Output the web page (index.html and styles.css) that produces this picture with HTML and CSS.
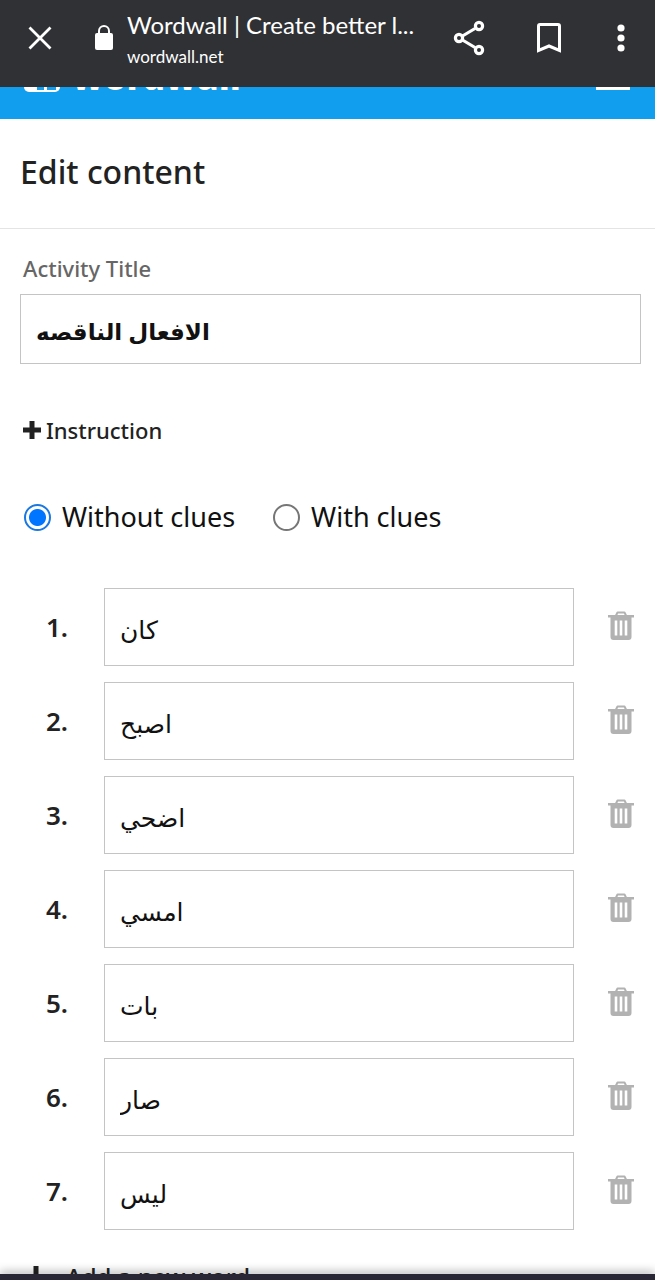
FILE: index.html
```
<!DOCTYPE html>
<html lang="en">
<head>
  <meta charset="UTF-8">
  <meta name="viewport" content="width=device-width, initial-scale=1">
  <title>Wordwall</title>
  <link rel="stylesheet" href="styles.css">
</head>
<body>
  <svg class="defs" aria-hidden="true">
    <symbol id="trash" viewBox="0 0 26 30">
      <path d="M8 4.500 9.500 1.500H16.500L18 4.500" fill="none" stroke="currentColor" stroke-width="2" stroke-linejoin="round"/>
      <path d="M0 4H26V6.500H23.500V26Q23.500 29 20.500 29H5.500Q2.500 29 2.500 26V6.500H0Z" fill="currentColor"/>
      <path d="M8 9.500V24.500M13 9.500V24.500M18 9.500V24.500" stroke="#fff" stroke-width="2.600"/>
    </symbol>
  </svg>

  <div class="toolbar">
    <button class="icon-btn" type="button" aria-label="Close">
      <svg width="24" height="24" viewBox="0 0 24 24"><path d="M1.500 1.500 22.500 22.500M22.500 1.500 1.500 22.500" fill="none" stroke="#fff" stroke-width="2.800"/></svg>
    </button>
    <svg class="lock" width="20" height="26" viewBox="0 0 20 26"><rect x="1" y="8" width="18" height="17" rx="2" fill="#fff"/><path d="M5 9V6a5 5 0 0 1 10 0v3" fill="none" stroke="#fff" stroke-width="2"/></svg>
    <div class="page-info">
      <div class="page-title">Wordwall | Create better l...</div>
      <div class="page-url">wordwall.net</div>
    </div>
    <div class="toolbar-actions">
      <button class="icon-btn" type="button" aria-label="Share">
        <svg width="32" height="36" viewBox="0 0 32 36"><g fill="none" stroke="#fff" stroke-width="3.200"><path d="M9.500 16 22 8.500M9.500 20 22 27.500"/><circle cx="6" cy="18" r="3.600"/><circle cx="26" cy="6" r="3.600"/><circle cx="26" cy="30" r="3.600"/></g></svg>
      </button>
      <button class="icon-btn" type="button" aria-label="Bookmark">
        <svg width="26" height="32" viewBox="0 0 26 32"><path d="M2.500 28.500V4Q2.500 2.500 4 2.500H22Q23.500 2.500 23.500 4V28.500L13 24Z" fill="none" stroke="#fff" stroke-width="3"/></svg>
      </button>
      <button class="icon-btn" type="button" aria-label="More options">
        <svg width="8" height="28" viewBox="0 0 8 28"><g fill="#fff"><circle cx="4" cy="4" r="3.600"/><circle cx="4" cy="14" r="3.600"/><circle cx="4" cy="24" r="3.600"/></g></svg>
      </button>
    </div>
  </div>

  <div class="page">
    <!-- Brand bar, scrolled partly under the toolbar -->
    <header class="brand-bar">
      <a class="brand" href="#">
        <svg width="36" height="36" viewBox="0 0 36 36"><rect width="36" height="36" rx="5" fill="#fff"/><path d="M13 34H20V27H13ZM23 34H32V27H23Z" fill="#129eee"/></svg>
        <span>wordwall</span>
      </a>
      <button class="menu-btn" type="button" aria-label="Menu"></button>
    </header>

    <div class="page-head">
      <h1>Edit content</h1>
    </div>

    <form class="editor">
      <label class="title-label" for="activityTitle">Activity Title</label>
      <input class="title-input" type="text" id="activityTitle" name="activityTitle" value="الافعال الناقصه">

      <button class="instruction" type="button">
        <svg width="18" height="18" viewBox="0 0 18 18"><path d="M9 2.500V15.500M2.500 9H15.500" stroke="currentColor" stroke-width="5" stroke-linecap="square"/></svg>
        Instruction
      </button>

      <div class="clues">
        <label><input type="radio" name="clues" value="without" checked> Without clues</label>
        <label><input type="radio" name="clues" value="with"> With clues</label>
      </div>

      <div class="words">
        <div class="word">
          <label for="word1">1.</label>
          <input type="text" id="word1" value="كان">
          <button type="button" aria-label="Delete word 1"><svg width="26" height="30"><use href="#trash"/></svg></button>
        </div>
        <div class="word">
          <label for="word2">2.</label>
          <input type="text" id="word2" value="اصبح">
          <button type="button" aria-label="Delete word 2"><svg width="26" height="30"><use href="#trash"/></svg></button>
        </div>
        <div class="word">
          <label for="word3">3.</label>
          <input type="text" id="word3" value="اضحي">
          <button type="button" aria-label="Delete word 3"><svg width="26" height="30"><use href="#trash"/></svg></button>
        </div>
        <div class="word">
          <label for="word4">4.</label>
          <input type="text" id="word4" value="امسي">
          <button type="button" aria-label="Delete word 4"><svg width="26" height="30"><use href="#trash"/></svg></button>
        </div>
        <div class="word">
          <label for="word5">5.</label>
          <input type="text" id="word5" value="بات">
          <button type="button" aria-label="Delete word 5"><svg width="26" height="30"><use href="#trash"/></svg></button>
        </div>
        <div class="word">
          <label for="word6">6.</label>
          <input type="text" id="word6" value="صار">
          <button type="button" aria-label="Delete word 6"><svg width="26" height="30"><use href="#trash"/></svg></button>
        </div>
        <div class="word">
          <label for="word7">7.</label>
          <input type="text" id="word7" value="ليس">
          <button type="button" aria-label="Delete word 7"><svg width="26" height="30"><use href="#trash"/></svg></button>
        </div>
      </div>

      <button class="add-word" type="button">
        <svg width="22" height="22" viewBox="0 0 22 22"><path d="M11 0V22M0 11H22" stroke="currentColor" stroke-width="5"/></svg>
        Add a new word
      </button>
    </form>
  </div>

  <div class="system-bar"></div>
</body>
</html>
```
FILE: styles.css
```
* {
  box-sizing: border-box;
}
body {
  margin: 0;
  height: 100vh;
  display: flex;
  flex-direction: column;
  background: #fff;
  color: #222;
  font-family: 'Noto Sans', 'Open Sans', 'DejaVu Sans', sans-serif;
}
button {
  border: none;
  background: none;
  padding: 0;
  color: inherit;
  font-family: inherit;
  cursor: pointer;
}
svg {
  display: block;
  flex: none;
}
.defs {
  position: absolute;
  width: 0;
  height: 0;
}

/* Browser toolbar */
.toolbar {
  flex: none;
  display: flex;
  align-items: center;
  padding: 8px 30px 15px 28px;
  background: #303134;
  color: #fff;
}
.toolbar > svg,
.toolbar button {
  margin-bottom: 4px;
}
.lock {
  margin-left: 42px;
}
.page-info {
  flex: 1;
  min-width: 0;
  margin: 0 30px 0 13px;
  font-family: Lato, sans-serif;
}
.page-title {
  font-size: 24px;
  line-height: 34px;
  white-space: nowrap;
  overflow: hidden;
  text-overflow: ellipsis;
}
.page-url {
  font-size: 17px;
  line-height: 30px;
}
.toolbar-actions {
  display: flex;
  align-items: center;
  gap: 51px;
}
.toolbar-actions .icon-btn:last-child {
  margin-left: 4px;
}

/* Page */
.page {
  flex: 1;
  min-height: 0;
  overflow: hidden;
}
.brand-bar {
  display: flex;
  justify-content: space-between;
  align-items: flex-start;
  height: 32px;
  padding: 0 25px 0 24px;
  overflow: hidden;
  background: #129eee;
}
.brand {
  display: flex;
  align-items: flex-end;
  gap: 12px;
  margin-top: -31px;
  color: #fff;
  font-size: 36px;
  font-weight: 800;
  line-height: 36px;
  text-decoration: none;
}
.brand span {
  margin-bottom: -3px;
}
.menu-btn {
  width: 34px;
  height: 3px;
  background: #fff;
}
.page-head {
  padding: 31px 20px 34px;
  border-bottom: 1px solid #e4e4e4;
}
h1 {
  margin: 0;
  font-size: 32px;
  font-weight: 500;
  line-height: 44px;
}
.editor {
  display: flex;
  flex-direction: column;
  align-items: flex-start;
  padding: 24px 14px 0 20px;
}
.title-label {
  padding-left: 3px;
  color: #666;
  font-size: 22px;
  font-weight: 500;
  line-height: 30px;
}
input[type="text"] {
  min-width: 0;
  border: 1px solid #c4c4c4;
  border-radius: 0;
  background: #fff;
  color: #111;
  font-family: inherit;
  font-size: 25px;
}
.editor .title-input {
  width: 100%;
  height: 70px;
  margin-top: 11px;
  padding: 4px 15px 0;
  font-size: 23px;
  font-weight: 700;
}
.instruction {
  display: flex;
  align-items: center;
  gap: 5px;
  margin: 51px 0 0 3px;
  font-size: 22px;
  font-weight: 500;
  line-height: 30px;
}
.clues {
  display: flex;
  gap: 38px;
  margin: 53px 0 0 4px;
  color: #111;
  font-size: 27px;
  line-height: 38px;
}
.clues label {
  display: flex;
  align-items: center;
  gap: 11px;
}
.clues input {
  appearance: none;
  width: 27px;
  height: 27px;
  margin: 0;
  border: 2px solid #767676;
  border-radius: 50%;
}
.clues input:checked {
  border-color: #1a78e0;
  background: radial-gradient(circle, #0075ff 8px, #fff 9px);
}
.words {
  display: flex;
  flex-direction: column;
  gap: 16px;
  width: 100%;
  margin-top: 52px;
}
.word {
  display: flex;
  align-items: center;
  padding: 0 7px 0 26px;
}
.word label {
  width: 58px;
  font-size: 26px;
  font-weight: 600;
}
.word input {
  flex: 1;
  height: 78px;
  padding: 4px 15px 0;
}
.word button {
  margin-left: 34px;
  padding-bottom: 2px;
  color: #b2b2b2;
}
.add-word {
  display: flex;
  align-items: center;
  gap: 19px;
  margin: 30px 0 0 5px;
  font-size: 24px;
  font-weight: 500;
  line-height: 34px;
}
.system-bar {
  flex: none;
  height: 6px;
  background: #292735;
  box-shadow: 0 -2px 10px rgba(0, 0, 0, 0.35);
}
```
